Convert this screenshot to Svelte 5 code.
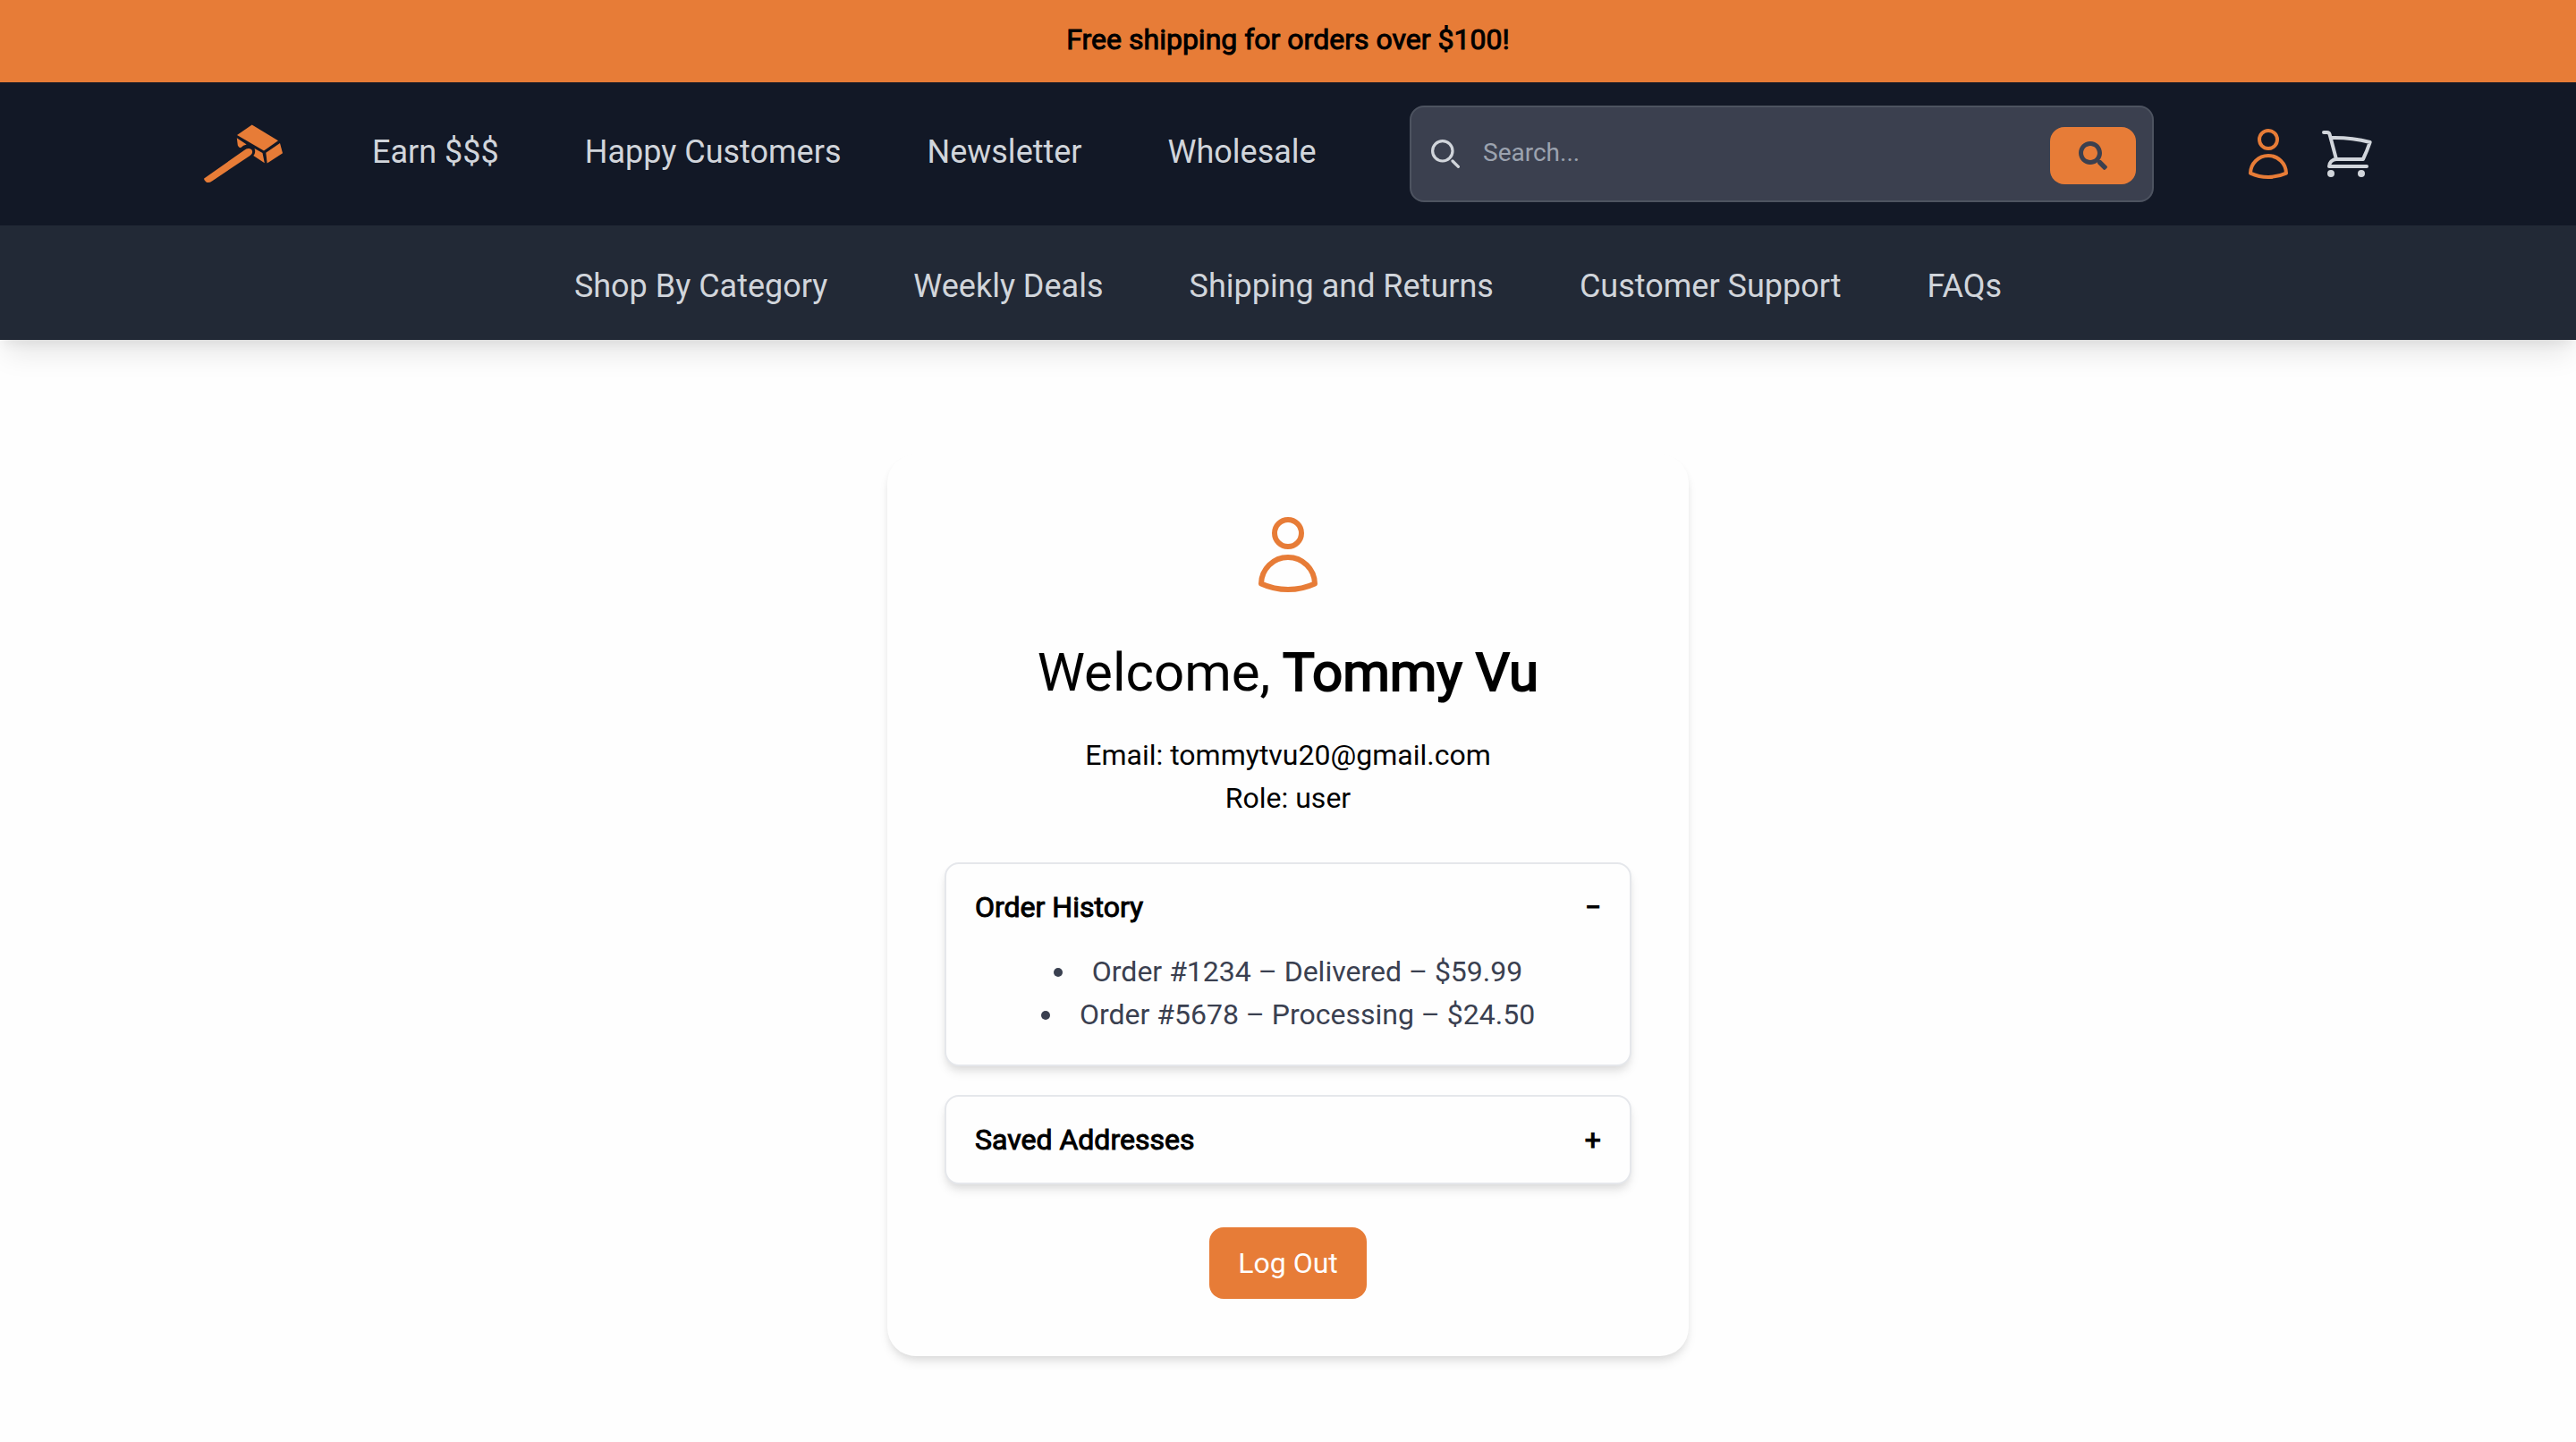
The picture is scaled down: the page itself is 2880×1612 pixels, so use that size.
<script>
  const primary = ['Earn $$$', 'Happy Customers', 'Newsletter', 'Wholesale'];
  const secondary = ['Shop By Category', 'Weekly Deals', 'Shipping and Returns', 'Customer Support', 'FAQs'];
  const orders = ['Order #1234 – Delivered – $59.99', 'Order #5678 – Processing – $24.50'];

  let ordersOpen = $state(true);
  let addressesOpen = $state(false);
  let query = $state('');
</script>

{#snippet userIcon()}
  <svg viewBox="0 0 24 24" fill="none" stroke="currentColor" stroke-width="1.5" stroke-linecap="round" stroke-linejoin="round" aria-hidden="true">
    <path d="M15.75 6a3.75 3.75 0 11-7.5 0 3.75 3.75 0 017.5 0zM4.501 20.118a7.5 7.5 0 0114.998 0A17.933 17.933 0 0112 21.75c-2.676 0-5.216-.584-7.499-1.632z" />
  </svg>
{/snippet}

<div class="banner strong">Free shipping for orders over $100!</div>

<header>
  <div class="bar">
    <div class="inner">
      <a class="logo" href="/" aria-label="Home">
        <svg viewBox="0 0 96 96" fill="currentColor" aria-hidden="true">
          <path d="M57.7 15.5 87 33.3 71 44.5 41 27z" />
          <path d="M89 36 92 47.3 74.7 58.5 73.3 46.8z" />
          <path d="M60.5 42 69.5 47 71.8 58.2 59.3 50Q62.5 46.500 60.5 42z" />
          <path d="M40.800 30.300 51.700 37.500Q48 38 45 41.200Q42.800 41 41.800 38.500z" />
          <path d="M4.200 75.500 49 44Q53.500 40.500 57.500 43.500Q59.500 47.500 55.500 50L13 78.500Q9.500 81 6.500 79.500Q3.500 77 4.200 75.500z" />
        </svg>
      </a>
      <nav class="links main" aria-label="Primary">
        {#each primary as item}<a href="/">{item}</a>{/each}
      </nav>
      <form class="search" role="search" onsubmit={(e) => e.preventDefault()}>
        <svg class="glass" viewBox="0 0 20 20" fill="none" stroke="currentColor" stroke-width="2" stroke-linecap="round" stroke-linejoin="round" aria-hidden="true">
          <path d="m19 19-4-4m0-7A7 7 0 1 1 1 8a7 7 0 0 1 14 0Z" />
        </svg>
        <input type="search" aria-label="Search" placeholder="Search..." bind:value={query} />
        <button type="submit" aria-label="Submit search">
          <svg viewBox="0 0 512 512" fill="currentColor" aria-hidden="true">
            <path d="M505 442.7L405.3 343c-4.5-4.5-10.6-7-17-7H372c27.6-35.3 44-79.7 44-128C416 93.1 322.9 0 208 0S0 93.1 0 208s93.1 208 208 208c48.3 0 92.7-16.4 128-44v16.3c0 6.4 2.5 12.5 7 17l99.7 99.7c9.4 9.4 24.6 9.4 33.9 0l28.3-28.3c9.4-9.4 9.4-24.6.1-34zM208 336c-70.7 0-128-57.2-128-128 0-70.7 57.2-128 128-128 70.7 0 128 57.2 128 128 0 70.7-57.2 128-128 128z" />
          </svg>
        </button>
      </form>
      <div class="actions">
        <a class="account" href="/" aria-label="Account">{@render userIcon()}</a>
        <a href="/" aria-label="Cart">
          <svg viewBox="0 0 24 24" fill="none" stroke="currentColor" stroke-width="1.5" stroke-linecap="round" stroke-linejoin="round" aria-hidden="true">
            <path d="M2.25 3h1.386c.51 0 .955.343 1.087.835l.383 1.437M7.5 14.25a3 3 0 00-3 3h15.75m-12.75-3h11.218c1.121-2.3 2.1-4.684 2.924-7.138a60.114 60.114 0 00-16.536-1.84M7.5 14.25L5.106 5.272M6 20.25a.75.75 0 11-1.5 0 .75.75 0 011.5 0zm12.75 0a.75.75 0 11-1.5 0 .75.75 0 011.5 0z" />
          </svg>
        </a>
      </div>
    </div>
  </div>
  <nav class="links sub" aria-label="Shop">
    {#each secondary as item}<a href="/">{item}</a>{/each}
  </nav>
</header>

<main>
  <section class="card">
    <div class="avatar">{@render userIcon()}</div>
    <h1>Welcome, <span class="strong">Tommy Vu</span></h1>
    <p>Email: tommytvu20@gmail.com</p>
    <p>Role: user</p>

    <div class="panels">
      <div class="panel">
        <button class="toggle strong" aria-expanded={ordersOpen} onclick={() => (ordersOpen = !ordersOpen)}>
          <span>Order History</span><span>{ordersOpen ? '−' : '+'}</span>
        </button>
        {#if ordersOpen}
          <ul>
            {#each orders as order}<li>{order}</li>{/each}
          </ul>
        {/if}
      </div>
      <div class="panel">
        <button class="toggle strong" aria-expanded={addressesOpen} onclick={() => (addressesOpen = !addressesOpen)}>
          <span>Saved Addresses</span><span>{addressesOpen ? '−' : '+'}</span>
        </button>
      </div>
    </div>

    <button class="logout">Log Out</button>
  </section>
</main>

<style>
  :global(body) {
    margin: 0;
    background: #fefefe;
    color: #000;
    font: 32px/48px Roboto, sans-serif;
  }
  svg {
    display: block;
    width: 100%;
    height: 100%;
  }
  a {
    color: inherit;
    text-decoration: none;
  }
  button,
  input {
    box-sizing: border-box;
    margin: 0;
    border: 0;
    font: inherit;
  }
  button {
    cursor: pointer;
  }
  .strong {
    -webkit-text-stroke: 1px currentColor;
  }
  .banner {
    padding: 20px 32px 24px;
    background: #e77c37;
    text-align: center;
  }
  header {
    background: #222936;
    color: #d1d5db;
    box-shadow: 0 20px 30px -6px rgb(0 0 0 / 0.1), 0 8px 12px -4px rgb(0 0 0 / 0.06);
  }
  .bar {
    background: #121826;
  }
  .inner {
    box-sizing: border-box;
    display: flex;
    align-items: center;
    max-width: 2560px;
    min-height: 160px;
    margin: 0 auto;
    padding: 0 64px;
  }
  .logo {
    flex: none;
    width: 96px;
    height: 96px;
    margin-right: 96px;
    color: #e77c37;
  }
  .links {
    display: flex;
    gap: 96px;
    font-size: 36px;
    line-height: 56px;
    white-space: nowrap;
  }
  .main {
    padding-bottom: 4px;
  }
  .sub {
    justify-content: center;
    padding: 40px 32px 32px;
  }
  .search {
    position: relative;
    width: 832px;
    margin-left: auto;
    margin-right: 96px;
  }
  .search input {
    display: block;
    width: 100%;
    padding: 31px 128px 33px 80px;
    border: 2px solid #4d5360;
    border-radius: 16px;
    background: #3b404f;
    color: #d1d5db;
    font-size: 28px;
    line-height: 40px;
    appearance: none;
  }
  .search input::placeholder {
    color: #9ca3af;
    opacity: 1;
  }
  .glass {
    position: absolute;
    left: 24px;
    top: 38px;
    width: 32px;
    height: 32px;
  }
  .search button {
    position: absolute;
    right: 20px;
    bottom: 20px;
    width: 96px;
    height: 64px;
    padding: 16px 32px;
    border-radius: 16px;
    background: #e77c37;
    color: #3b404f;
  }
  .actions {
    display: flex;
    gap: 24px;
  }
  .actions a {
    width: 64px;
    height: 64px;
  }
  .actions .account {
    color: #e77c37;
  }
  main {
    padding: 128px 32px 96px;
  }
  .card {
    box-sizing: border-box;
    max-width: 896px;
    margin: 0 auto;
    padding: 64px;
    border-radius: 32px;
    background: #fefefe;
    box-shadow: 0 8px 12px -2px rgb(0 0 0 / 0.1), 0 4px 8px -2px rgb(0 0 0 / 0.06);
    text-align: center;
  }
  .avatar {
    width: 96px;
    height: 96px;
    margin: 0 auto 48px;
    color: #e77c37;
  }
  h1 {
    margin: 0 0 32px;
    font-size: 60px;
    font-weight: 400;
    line-height: 72px;
  }
  h1 .strong {
    -webkit-text-stroke-width: 2px;
  }
  p {
    margin: 0;
  }
  .panels {
    display: grid;
    gap: 32px;
    margin: 48px 0;
  }
  .panel {
    border: 2px solid #e5e7eb;
    border-radius: 16px;
    background: #fefefe;
    box-shadow: 0 8px 12px -2px rgb(0 0 0 / 0.1), 0 4px 8px -2px rgb(0 0 0 / 0.06);
  }
  .toggle {
    display: flex;
    justify-content: space-between;
    width: 100%;
    padding: 24px 32px;
    background: none;
    color: inherit;
  }
  ul {
    margin: 0;
    padding: 0 32px 32px;
    list-style: disc inside;
    color: #3a4050;
  }
  .logout {
    padding: 16px 32px;
    border-radius: 16px;
    background: #e77c37;
    color: #fefefe;
  }
</style>
